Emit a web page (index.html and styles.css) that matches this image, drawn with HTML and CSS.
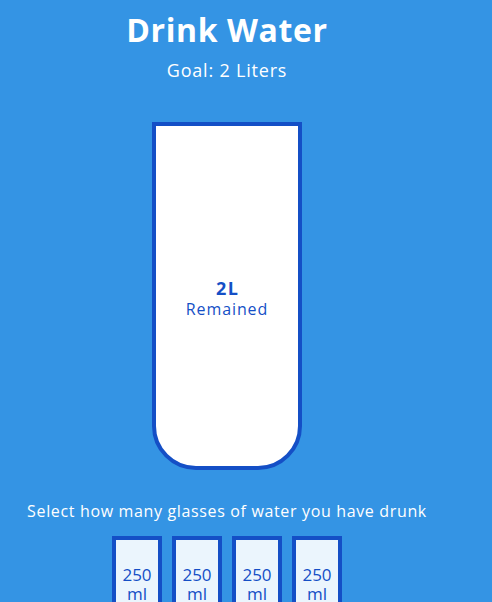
FILE: index.html
```html
<!DOCTYPE html>
<html lang="en">
<head>
<meta charset="UTF-8">
<title>Drink Water</title>
<link rel="stylesheet" href="styles.css">
</head>
<body>
<main class="app">
  <h1 class="title">Drink Water</h1>
  <h3 class="goal">Goal: 2 Liters</h3>
  <div class="cup">
    <div class="remained">
      <span class="liters">2L</span>
      <small class="remained-label">Remained</small>
    </div>
  </div>
  <p class="text">Select how many glasses of water you have drunk</p>
  <div class="cups">
    <div class="cup-small">250 ml</div>
    <div class="cup-small">250 ml</div>
    <div class="cup-small">250 ml</div>
    <div class="cup-small">250 ml</div>
    <div class="cup-small">250 ml</div>
    <div class="cup-small">250 ml</div>
    <div class="cup-small">250 ml</div>
    <div class="cup-small">250 ml</div>
  </div>
</main>
</body>
</html>
```

FILE: styles.css
```css
* {
  box-sizing: border-box;
}

html, body {
  margin: 0;
  padding: 0;
}

body {
  background-color: #3494e4;
  color: #ffffff;
  font-family: "Open Sans", "DejaVu Sans", sans-serif;
  overflow: hidden;
}

.app {
  width: 454px;
  display: flex;
  flex-direction: column;
  align-items: center;
}

.title {
  margin: 10px 0 0;
  font-size: 32px;
  line-height: 40px;
  font-weight: 700;
  letter-spacing: 0.6px;
}

.goal {
  margin: 8px 0 0;
  font-size: 18px;
  line-height: 24px;
  font-weight: 400;
  letter-spacing: 0.8px;
}

.cup {
  margin-top: 40px;
  width: 150px;
  height: 348px;
  background-color: #ffffff;
  border: 4px solid #144fc6;
  border-radius: 0 0 44px 44px;
  color: #144fc6;
  display: flex;
  flex-direction: column;
  overflow: hidden;
}

.remained {
  flex: 1;
  display: flex;
  flex-direction: column;
  align-items: center;
  justify-content: center;
  text-align: center;
  padding-top: 6px;
}

.liters {
  font-size: 18px;
  line-height: 21px;
  font-weight: 700;
  letter-spacing: 1.5px;
  padding-left: 1.5px;
}

.remained-label {
  font-size: 16px;
  line-height: 21px;
  letter-spacing: 0.9px;
}

.text {
  margin: 31px 0 10px;
  font-size: 16px;
  line-height: 20px;
  text-align: center;
  letter-spacing: 0.65px;
}

.cups {
  width: 280px;
  display: flex;
  flex-wrap: wrap;
  justify-content: center;
  align-items: center;
}

.cup-small {
  width: 50px;
  height: 95px;
  margin: 5px;
  background-color: rgba(255, 255, 255, 0.9);
  border: 4px solid #144fc6;
  border-radius: 0 0 15px 15px;
  color: #144fc6;
  font-size: 17px;
  line-height: 19px;
  display: flex;
  align-items: center;
  justify-content: center;
  text-align: center;
}
```
